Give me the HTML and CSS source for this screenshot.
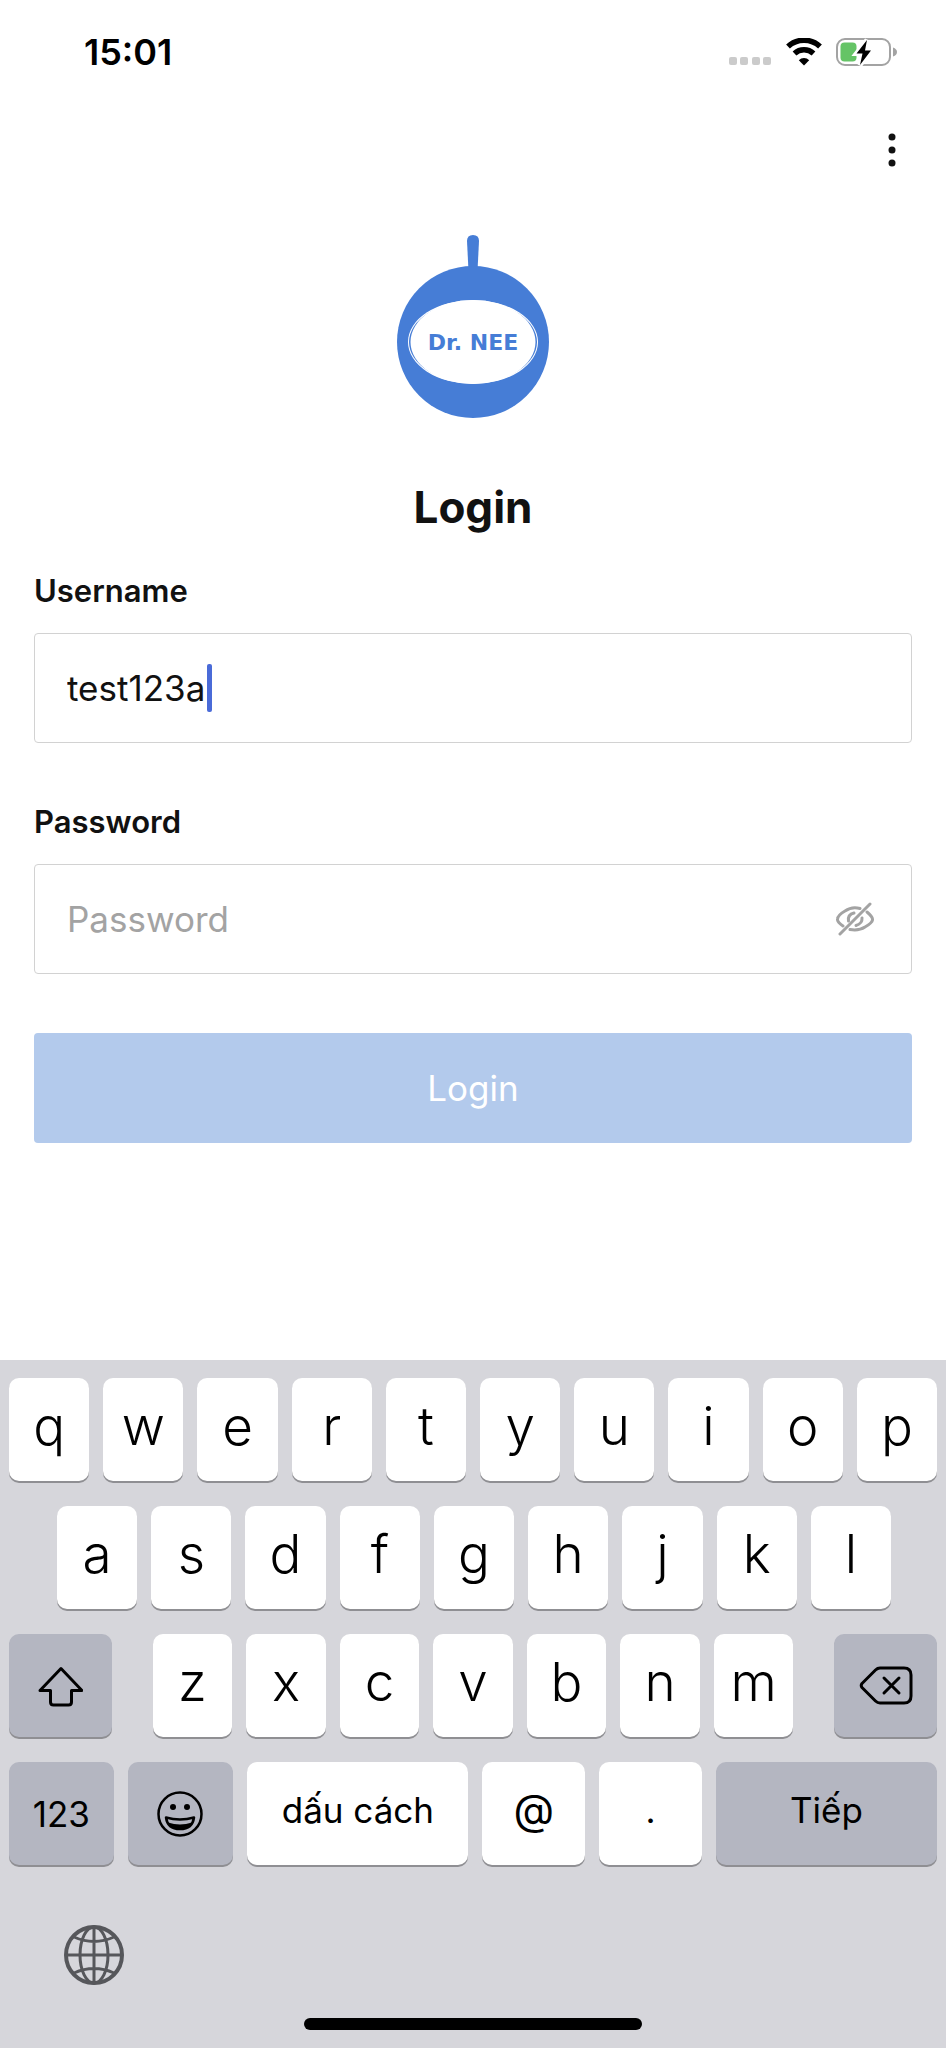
FILE: index.html
```html
<!DOCTYPE html>
<html lang="vi">
<head>
  <meta charset="UTF-8">
  <meta name="viewport" content="width=device-width, initial-scale=1.0">
  <title>Dr. NEE - Login</title>
  <link rel="stylesheet" href="styles.css">
</head>
<body>
  <header class="status-bar">
    <span class="time">15:01</span>
    <div class="status-icons">
      <svg width="44" height="28" viewBox="0 0 44 28" fill="#cbcbcb">
        <rect x="1" y="19" width="8" height="8" rx="2"/>
        <rect x="12" y="19" width="8" height="8" rx="2"/>
        <rect x="24" y="19" width="8" height="8" rx="2"/>
        <rect x="35" y="19" width="8" height="8" rx="2"/>
      </svg>
      <svg width="36" height="28" viewBox="0 0 36 28">
        <path d="M2 8.500A23.500 23.500 0 0 1 34 8.500" fill="none" stroke="#000" stroke-width="5.500"/>
        <path d="M8.500 15.500A14 14 0 0 1 27.500 15.500" fill="none" stroke="#000" stroke-width="5.500"/>
        <path d="M18 27.500L12.800 22.200A7.500 7.500 0 0 1 23.200 22.200Z"/>
      </svg>
      <svg width="62" height="28" viewBox="0 0 62 28">
        <rect x="1" y="1" width="53" height="26" rx="8" fill="#fff" stroke="#a3a3a3" stroke-width="2"/>
        <rect x="4.500" y="4.500" width="16" height="19" rx="4" fill="#65c466"/>
        <path d="M57 9.500Q61 11 61 14Q61 17 57 18.500Z" fill="#a3a3a3"/>
        <path d="M31 2L20.500 15.500H26.500L24 27L35 12.500H29Z" fill="#000" stroke="#fff" stroke-width="5" paint-order="stroke"/>
      </svg>
    </div>
  </header>

  <nav class="toolbar">
    <button class="menu-btn" type="button" aria-label="Menu">
      <svg width="8" height="36" viewBox="0 0 8 36" fill="#111">
        <circle cx="4" cy="5" r="3.500"/>
        <circle cx="4" cy="18" r="3.500"/>
        <circle cx="4" cy="31" r="3.500"/>
      </svg>
    </button>
  </nav>

  <main class="login">
    <svg class="logo" width="154" height="184" viewBox="0 0 154 184">
      <path d="M71 6Q71 0 77 0Q83 0 83 6L81.500 36H72.500Z" fill="#467dd6"/>
      <circle cx="77" cy="107" r="76" fill="#467dd6"/>
      <ellipse cx="77" cy="107" rx="65" ry="42" fill="#fff"/>
      <ellipse cx="77" cy="107" rx="64" ry="40.500" fill="#467dd6"/>
      <ellipse cx="77" cy="107" rx="62.500" ry="42" fill="#fff"/>
      <text class="logo-text" x="77" y="115" text-anchor="middle">Dr. NEE</text>
    </svg>

    <h1>Login</h1>

    <form class="login-form">
      <label for="username">Username</label>
      <div class="field">
        <input id="username" type="text" value="test123a">
        <span class="caret"></span>
      </div>

      <label for="password">Password</label>
      <div class="field">
        <input id="password" type="password" placeholder="Password">
        <button class="eye-btn" type="button" aria-label="Show password">
          <svg width="38" height="34" viewBox="0 0 38 34" fill="none" stroke="#a3a3a3" stroke-width="3" stroke-linecap="round">
            <path d="M7 24Q1 20 1.500 17Q2 13 9 9Q16 4 24 6.500"/>
            <path d="M31 10Q37 15 36.500 18Q36 21 29 25Q23 29 14 27.500"/>
            <path d="M12.500 19Q11.500 12.500 18 11"/>
            <path d="M26 16Q26.500 21.500 20 23.500"/>
            <path d="M4 32L34 2"/>
          </svg>
        </button>
      </div>

      <button class="login-btn" type="submit">Login</button>
    </form>
  </main>

  <section class="keyboard">
    <div class="row">
      <button class="key">q</button>
      <button class="key">w</button>
      <button class="key">e</button>
      <button class="key">r</button>
      <button class="key">t</button>
      <button class="key">y</button>
      <button class="key">u</button>
      <button class="key">i</button>
      <button class="key">o</button>
      <button class="key">p</button>
    </div>
    <div class="row row-home">
      <button class="key">a</button>
      <button class="key">s</button>
      <button class="key">d</button>
      <button class="key">f</button>
      <button class="key">g</button>
      <button class="key">h</button>
      <button class="key">j</button>
      <button class="key">k</button>
      <button class="key">l</button>
    </div>
    <div class="row row-shift">
      <button class="key dark" aria-label="Shift">
        <svg width="46" height="42" viewBox="0 0 46 42" fill="none" stroke="#000" stroke-width="3" stroke-linejoin="round">
          <path d="M24 3.500L45 25.500H34.500V37Q34.500 40 31.500 40H16.500Q13.500 40 13.500 37V25.500H3Z"/>
        </svg>
      </button>
      <div class="letters">
        <button class="key">z</button>
        <button class="key">x</button>
        <button class="key">c</button>
        <button class="key">v</button>
        <button class="key">b</button>
        <button class="key">n</button>
        <button class="key">m</button>
      </div>
      <button class="key dark" aria-label="Delete">
        <svg width="54" height="40" viewBox="0 0 54 40" fill="none" stroke="#000" stroke-width="3" stroke-linejoin="round" stroke-linecap="round">
          <path d="M21 2H45Q52 2 52 9V30Q52 37 45 37H21Q18.500 37 16.500 35L3 21.500Q1.500 19.500 3 17.500L16.500 4Q18.500 2 21 2Z"/>
          <path d="M25 12L40 27M40 12L25 27"/>
        </svg>
      </button>
    </div>
    <div class="row row-bottom">
      <button class="key dark small">123</button>
      <button class="key dark" aria-label="Emoji">
        <svg width="46" height="46" viewBox="0 0 46 46">
          <circle cx="23" cy="23" r="21.500" fill="none" stroke="#000" stroke-width="2.500"/>
          <circle cx="16" cy="16" r="3"/>
          <circle cx="30" cy="16" r="3"/>
          <path d="M9 26.500Q23 30.500 37 26.500Q35.500 38 23 38Q10.500 38 9 26.500Z" fill="none" stroke="#000" stroke-width="2.500" stroke-linejoin="round"/>
          <path d="M11 31.500Q23 35.500 35 31.500Q32 38.500 23 38.500Q14 38.500 11 31.500Z"/>
        </svg>
      </button>
      <button class="key small raised">dấu cách</button>
      <button class="key at">@</button>
      <button class="key small raised">.</button>
      <button class="key dark small raised">Tiếp</button>
    </div>
    <div class="keyboard-footer">
      <button class="globe-btn" type="button" aria-label="Next keyboard">
        <svg width="60" height="60" viewBox="0 0 60 60" fill="none" stroke="#56575b" stroke-width="3">
          <circle cx="30" cy="30" r="28" stroke-width="4"/>
          <ellipse cx="30" cy="30" rx="14" ry="28"/>
          <path d="M30 2V58M2 30H58M10 12Q30 21 50 12M10 48Q30 39 50 48"/>
        </svg>
      </button>
    </div>
    <div class="home-indicator"></div>
  </section>
</body>
</html>
```

FILE: styles.css
```css
* {
  box-sizing: border-box;
}

body {
  margin: 0;
  min-height: 100vh;
  display: flex;
  flex-direction: column;
  background-color: #fff;
  color: #111;
  font-family: Inter, "Liberation Sans", sans-serif;
}

button {
  padding: 0;
  border: none;
  background: none;
  font-family: inherit;
  color: inherit;
}

svg {
  display: block;
}

.status-bar {
  display: flex;
  justify-content: space-between;
  align-items: center;
  height: 104px;
  padding: 0 48px 0 84px;
}

.time {
  color: #000;
  font-size: 36px;
  font-weight: 600;
}

.status-icons {
  display: flex;
  gap: 14px;
}

.toolbar {
  display: flex;
  justify-content: flex-end;
  padding: 28px 50px 0;
}

.login {
  flex: 1;
  padding: 67px 34px 0;
}

.logo {
  margin: 0 auto;
}

.logo-text {
  fill: #467dd6;
  font-family: "DejaVu Sans", sans-serif;
  font-size: 22px;
  font-weight: 700;
}

h1 {
  margin: 60px 0 0;
  font-size: 44px;
  line-height: 56px;
  text-align: center;
}

.login-form label {
  display: block;
  margin: 36px 0 22px;
  font-size: 31px;
  font-weight: 600;
  line-height: 40px;
}

.field {
  position: relative;
  display: flex;
  align-items: center;
  height: 110px;
  margin-bottom: 59px;
  padding: 0 37px 0 32px;
  border: 1px solid #d2d2d2;
  border-radius: 4px;
}

.field input {
  flex: 1;
  min-width: 0;
  padding: 0;
  border: none;
  outline: none;
  background: none;
  color: #111;
  font-family: inherit;
  font-size: 35px;
}

.field input::placeholder {
  color: #a3a3a3;
}

.login-form .field + label {
  margin-top: 0;
}

.caret {
  position: absolute;
  top: 30px;
  left: 172px;
  width: 5px;
  height: 48px;
  border-radius: 2px;
  background-color: #4a6bd8;
}

.login-btn {
  width: 100%;
  height: 110px;
  border-radius: 4px;
  background-color: #b3caec;
  color: #fff;
  font-size: 35px;
}

.keyboard {
  display: flex;
  flex-direction: column;
  gap: 25px;
  padding: 18px 9px;
  background-color: #d6d6db;
}

.row,
.letters {
  display: flex;
  gap: 14px;
}

.row-home {
  padding: 0 46px 0 48px;
}

.key {
  display: flex;
  flex: 1;
  justify-content: center;
  align-items: center;
  min-width: 0;
  height: 103px;
  padding-bottom: 8px;
  border-radius: 10px;
  background-color: #fff;
  box-shadow: 0 2px 0 #8f8f93;
  color: #000;
  font-size: 53px;
  font-weight: 350;
}

.dark {
  padding-bottom: 0;
  background-color: #b4b6c1;
}

.small {
  font-size: 35px;
  font-weight: 400;
}

.raised {
  padding-bottom: 8px;
}

.at {
  font-size: 42px;
  font-weight: 400;
}

.row-shift {
  display: grid;
  grid-template-columns: 103fr 642fr 103fr;
  gap: 41px;
}

.row-bottom {
  display: grid;
  grid-template-columns: 105fr 106fr 222fr 103fr 103fr 222fr;
}

.keyboard-footer {
  padding: 35px 55px 0;
}

.home-indicator {
  width: 338px;
  height: 12px;
  margin: 4px auto 0;
  border-radius: 6px;
  background-color: #000;
}
```
